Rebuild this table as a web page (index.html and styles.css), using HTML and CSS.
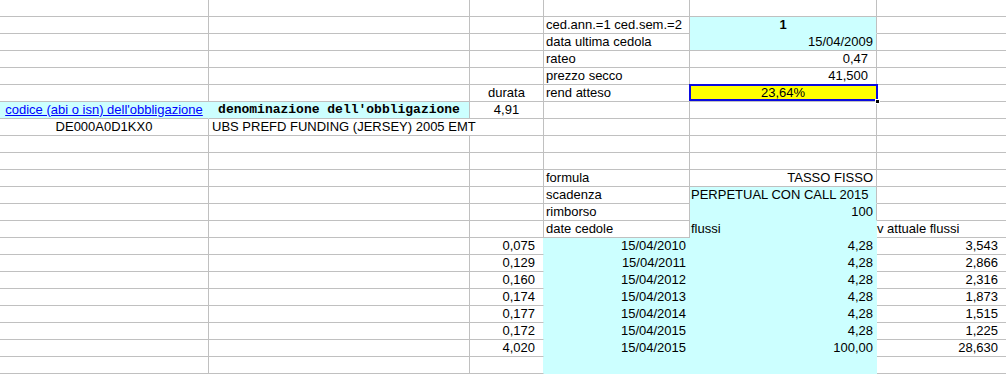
FILE: index.html
```html
<!DOCTYPE html>
<html lang="it">
<head>
<meta charset="utf-8">
<title>Calcolo rendimento obbligazione</title>
<link rel="stylesheet" href="styles.css">
</head>
<body>
<div class="sheet">
  <!-- row 0 -->
  <div class="c"></div><div class="c"></div><div class="c"></div><div class="c"></div><div class="c"></div><div class="c f"></div>
  <!-- row 1 -->
  <div class="c"></div><div class="c"></div><div class="c"></div>
  <div class="c">ced.ann.=1 ced.sem.=2</div>
  <div class="c fill hb ctr b">1</div>
  <div class="c f"></div>
  <!-- row 2 -->
  <div class="c"></div><div class="c"></div><div class="c"></div>
  <div class="c">data ultima cedola</div>
  <div class="c fill r">15/04/2009</div>
  <div class="c f"></div>
  <!-- row 3 -->
  <div class="c"></div><div class="c"></div><div class="c"></div>
  <div class="c">rateo</div>
  <div class="c r pr">0,47</div>
  <div class="c f"></div>
  <!-- row 4 -->
  <div class="c"></div><div class="c"></div><div class="c"></div>
  <div class="c">prezzo secco</div>
  <div class="c r pr">41,500</div>
  <div class="c f"></div>
  <!-- row 5 -->
  <div class="c"></div><div class="c"></div>
  <div class="c ctr">durata</div>
  <div class="c">rend atteso</div>
  <div class="c sel ctr">23,64%</div>
  <div class="c f"></div>
  <!-- row 6 -->
  <div class="c fill hr ctr"><a class="link" href="#">codice (abi o isn) dell'obbligazione</a></div>
  <div class="c fill ctr mono">denominazione dell'obbligazione</div>
  <div class="c ctr">4,91</div>
  <div class="c"></div><div class="c"></div><div class="c f"></div>
  <!-- row 7 -->
  <div class="c ctr">DE000A0D1KX0</div>
  <div class="c span2">UBS PREFD FUNDING (JERSEY) 2005 EMT</div>
  <div class="c"></div><div class="c"></div><div class="c f"></div>
  <!-- row 8 -->
  <div class="c"></div><div class="c"></div><div class="c"></div><div class="c"></div><div class="c"></div><div class="c f"></div>
  <!-- row 9 -->
  <div class="c"></div><div class="c"></div><div class="c"></div><div class="c"></div><div class="c"></div><div class="c f"></div>
  <!-- row 10 -->
  <div class="c"></div><div class="c"></div><div class="c"></div>
  <div class="c">formula</div>
  <div class="c r">TASSO FISSO</div>
  <div class="c f"></div>
  <!-- row 11 -->
  <div class="c"></div><div class="c"></div><div class="c"></div>
  <div class="c">scadenza</div>
  <div class="c fill hb e">PERPETUAL CON CALL 2015</div>
  <div class="c f"></div>
  <!-- row 12 -->
  <div class="c"></div><div class="c"></div><div class="c"></div>
  <div class="c">rimborso</div>
  <div class="c fill hb r">100</div>
  <div class="c f"></div>
  <!-- row 13 -->
  <div class="c"></div><div class="c"></div><div class="c"></div>
  <div class="c">date cedole</div>
  <div class="c fill hb hr e">flussi</div>
  <div class="c f fl">v attuale flussi</div>
  <!-- rows 14-20 -->
  <div class="c"></div><div class="c"></div><div class="c r pr hr">0,075</div>
  <div class="c fill hr hb r">15/04/2010</div><div class="c fill hr hb r">4,28</div><div class="c f r pr">3,543</div>

  <div class="c"></div><div class="c"></div><div class="c r pr hr">0,129</div>
  <div class="c fill hr hb r">15/04/2011</div><div class="c fill hr hb r">4,28</div><div class="c f r pr">2,866</div>

  <div class="c"></div><div class="c"></div><div class="c r pr hr">0,160</div>
  <div class="c fill hr hb r">15/04/2012</div><div class="c fill hr hb r">4,28</div><div class="c f r pr">2,316</div>

  <div class="c"></div><div class="c"></div><div class="c r pr hr">0,174</div>
  <div class="c fill hr hb r">15/04/2013</div><div class="c fill hr hb r">4,28</div><div class="c f r pr">1,873</div>

  <div class="c"></div><div class="c"></div><div class="c r pr hr">0,177</div>
  <div class="c fill hr hb r">15/04/2014</div><div class="c fill hr hb r">4,28</div><div class="c f r pr">1,515</div>

  <div class="c"></div><div class="c"></div><div class="c r pr hr">0,172</div>
  <div class="c fill hr hb r">15/04/2015</div><div class="c fill hr hb r">4,28</div><div class="c f r pr">1,225</div>

  <div class="c"></div><div class="c"></div><div class="c r pr hr">4,020</div>
  <div class="c fill hr hb r">15/04/2015</div><div class="c fill hr hb r">100,00</div><div class="c f r pr">28,630</div>
  <!-- row 21 -->
  <div class="c"></div><div class="c"></div><div class="c hr"></div>
  <div class="c fill hr hb"></div><div class="c fill hr hb"></div><div class="c f"></div>
</div>
</body>
</html>
```

FILE: styles.css
```css
body {
  margin: 0;
  background: #ffffff;
  color: #000000;
  font-family: "Liberation Sans", Arial, sans-serif;
  font-size: 13px;
}

.sheet {
  display: grid;
  grid-template-columns: 209px 261px 74px 146px 187px 1fr;
  grid-auto-rows: 17px;
  width: 1006px;
  overflow: hidden;
}

.c {
  position: relative;
  box-sizing: border-box;
  border-right: 1px solid #c0c0c0;
  border-bottom: 1px solid #c0c0c0;
  padding: 0 2px;
  line-height: 16px;
  white-space: nowrap;
  overflow: visible;
}

.f { border-right: none; }
.fl { padding-left: 0; }
.e { padding-left: 1px; }

.r { text-align: right; padding-right: 3px; }
.pr { padding-right: 8px; }
.ctr { text-align: center; padding: 0; }
.b { font-weight: bold; }

.fill { background: #ccffff; }
.hr { border-right-color: #ccffff; }
.hb { border-bottom-color: #ccffff; }

.span2 { grid-column: span 2; padding-left: 3px; }

.mono {
  font-family: "Liberation Mono", "Courier New", monospace;
  font-weight: bold;
}

.link {
  color: #0000ff;
  text-decoration: underline;
}

.sel {
  background: #ffff00;
}

.sel::after {
  content: "";
  position: absolute;
  top: -1px;
  left: -1px;
  right: -2px;
  bottom: 0;
  border: 2px solid #0a0ae0;
  pointer-events: none;
}

.sel::before {
  content: "";
  position: absolute;
  right: -4px;
  bottom: -3px;
  width: 5px;
  height: 5px;
  background: #000000;
  border: 1px solid #ffffff;
  box-sizing: border-box;
  z-index: 1;
}
```
